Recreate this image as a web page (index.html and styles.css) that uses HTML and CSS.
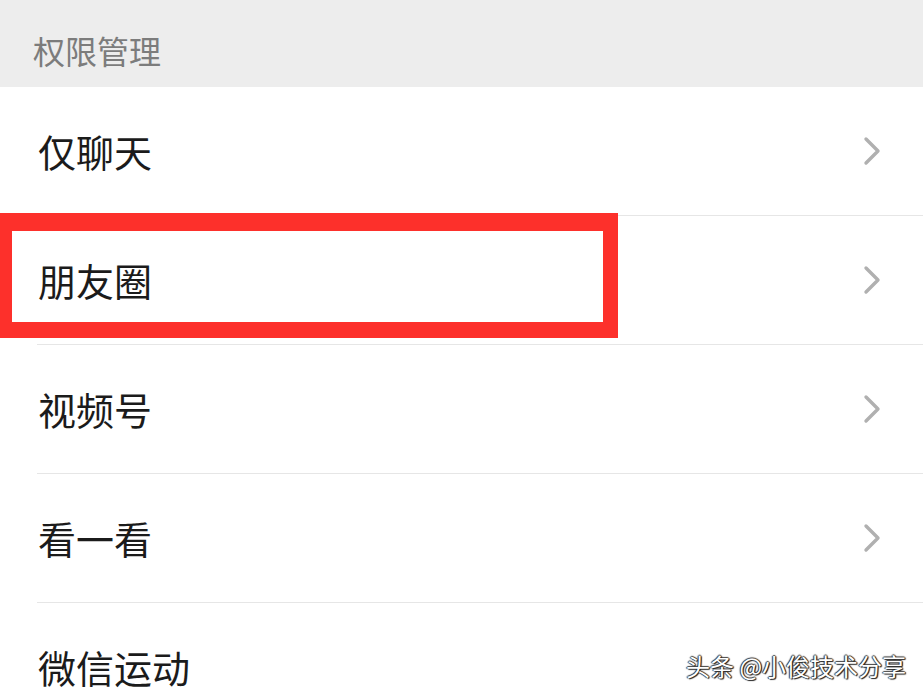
FILE: index.html
```html
<!DOCTYPE html>
<html lang="zh-CN">
<head>
<meta charset="utf-8">
<title>权限管理</title>
<link rel="stylesheet" href="styles.css">
</head>
<body>
<div class="page">
  <div class="header">权限管理</div>
  <div class="list">
    <div class="row"><span class="label">仅聊天</span>
      <svg class="chev" viewBox="0 0 20 30"><polyline points="4,3 16,15 4,27"/></svg></div>
    <div class="row"><span class="label">朋友圈</span>
      <svg class="chev" viewBox="0 0 20 30"><polyline points="4,3 16,15 4,27"/></svg></div>
    <div class="row"><span class="label">视频号</span>
      <svg class="chev" viewBox="0 0 20 30"><polyline points="4,3 16,15 4,27"/></svg></div>
    <div class="row"><span class="label">看一看</span>
      <svg class="chev" viewBox="0 0 20 30"><polyline points="4,3 16,15 4,27"/></svg></div>
    <div class="row last"><span class="label">微信运动</span></div>
  </div>
  <div class="highlight"></div>
  <div class="watermark">头条 @小俊技术分享</div>
</div>
</body>
</html>
```
FILE: styles.css
```css
html, body {
  margin: 0;
  padding: 0;
  background: #ffffff;
}
.page {
  position: relative;
  width: 923px;
  height: 699px;
  overflow: hidden;
  font-family: "Noto Sans CJK SC", "Noto Sans", sans-serif;
  background: #ffffff;
}
.header {
  height: 87px;
  box-sizing: border-box;
  background: #ededed;
  color: #7c7c7c;
  font-size: 32px;
  line-height: 32px;
  padding: 34px 0 0 33px;
}
.list {
  padding-left: 37px;
}
.row {
  height: 128px;
  border-bottom: 1px solid #e6e6e6;
  display: flex;
  align-items: center;
  justify-content: space-between;
}
.row.last {
  border-bottom: none;
}
.label {
  font-size: 38px;
  line-height: 40px;
  color: #1b1b1b;
  padding-left: 1px;
  padding-top: 0;
}
.chev {
  width: 20px;
  height: 30px;
  margin-right: 41px;
}
.chev polyline {
  fill: none;
  stroke: #b0b0b0;
  stroke-width: 3.4;
  stroke-linecap: round;
  stroke-linejoin: round;
}
.highlight {
  position: absolute;
  left: 0;
  top: 213px;
  width: 591px;
  height: 91px;
  border-style: solid;
  border-color: #fd302b;
  border-width: 18px 15px 16px 12px;
}
.watermark {
  position: absolute;
  left: 686px;
  top: 651px;
  font-size: 24px;
  line-height: 30px;
  color: #ffffff;
  letter-spacing: 0;
  text-shadow: 1px 1px 1px #222, -1px 0 1px #333, 0 -1px 1px #444, 1px 0 1px #222;
}
```
